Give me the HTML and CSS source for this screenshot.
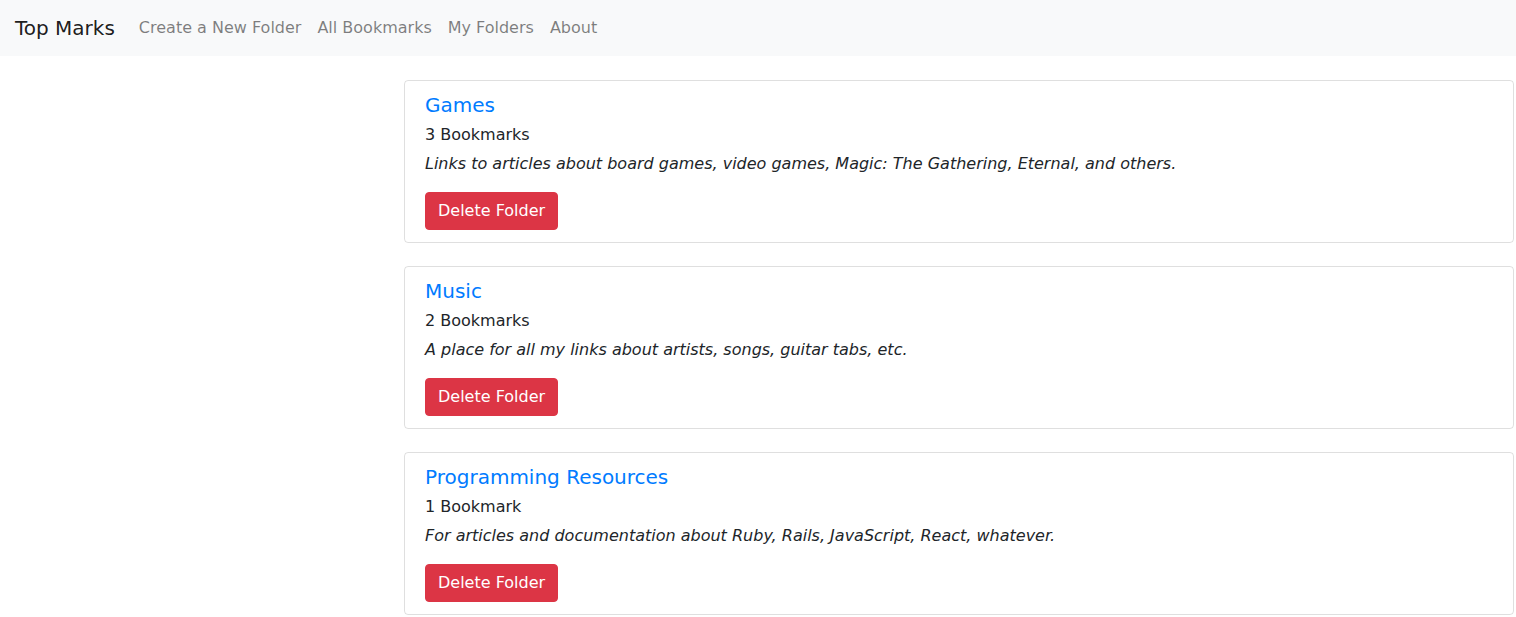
FILE: index.html
```html
<!DOCTYPE html>
<html lang="en">
<head>
<meta charset="utf-8">
<title>Top Marks</title>
<link rel="stylesheet" href="styles.css">
</head>
<body>
<nav class="navbar">
  <a class="brand" href="#">Top Marks</a>
  <ul class="nav">
    <li><a href="#">Create a New Folder</a></li>
    <li><a href="#">All Bookmarks</a></li>
    <li><a href="#">My Folders</a></li>
    <li><a href="#">About</a></li>
  </ul>
</nav>
<main class="folders">
  <section class="card">
    <a class="card-title" href="#">Games</a>
    <p class="count">3 Bookmarks</p>
    <p class="desc">Links to articles about board games, video games, Magic: The Gathering, Eternal, and others.</p>
    <button class="btn-danger">Delete Folder</button>
  </section>
  <section class="card">
    <a class="card-title" href="#">Music</a>
    <p class="count">2 Bookmarks</p>
    <p class="desc">A place for all my links about artists, songs, guitar tabs, etc.</p>
    <button class="btn-danger">Delete Folder</button>
  </section>
  <section class="card">
    <a class="card-title" href="#">Programming Resources</a>
    <p class="count">1 Bookmark</p>
    <p class="desc">For articles and documentation about Ruby, Rails, JavaScript, React, whatever.</p>
    <button class="btn-danger">Delete Folder</button>
  </section>
</main>
</body>
</html>
```
FILE: styles.css
```css
* { box-sizing: border-box; }
body {
  margin: 0;
  font-family: "DejaVu Sans", sans-serif;
  font-size: 16px;
  line-height: 1.5;
  color: #212529;
  background: #fff;
}
.navbar {
  display: flex;
  align-items: center;
  height: 56px;
  padding: 8px 16px 8px 15px;
  background: #f8f9fa;
}
.brand {
  font-size: 20px;
  line-height: 30px;
  color: rgba(0,0,0,.9);
  text-decoration: none;
  margin-right: 16px;
}
.nav {
  display: flex;
  list-style: none;
  margin: 0;
  padding: 0;
}
.nav a {
  display: block;
  padding: 8px;
  color: rgba(0,0,0,.5);
  text-decoration: none;
}
.folders {
  width: 1110px;
  margin: 24px 0 0 404px;
}
.card {
  display: block;
  height: 163px;
  border: 1px solid rgba(0,0,0,.125);
  border-radius: 4px;
  padding: 12px 20px;
  margin-bottom: 23px;
}
.card-title {
  display: block;
  height: 24px;
  font-size: 20px;
  line-height: 24px;
  color: #007bff;
  text-decoration: none;
  margin-bottom: 6px;
}
.count {
  height: 24px;
  line-height: 24px;
  margin: 0 0 5px;
}
.desc {
  height: 24px;
  line-height: 24px;
  margin: 0 0 16px;
  font-style: italic;
}
.btn-danger {
  display: block;
  height: 38px;
  font-family: inherit;
  font-size: 16px;
  line-height: 24px;
  padding: 6px 12px;
  color: #fff;
  background: #dc3545;
  border: 1px solid #dc3545;
  border-radius: 4px;
  cursor: pointer;
}
```
